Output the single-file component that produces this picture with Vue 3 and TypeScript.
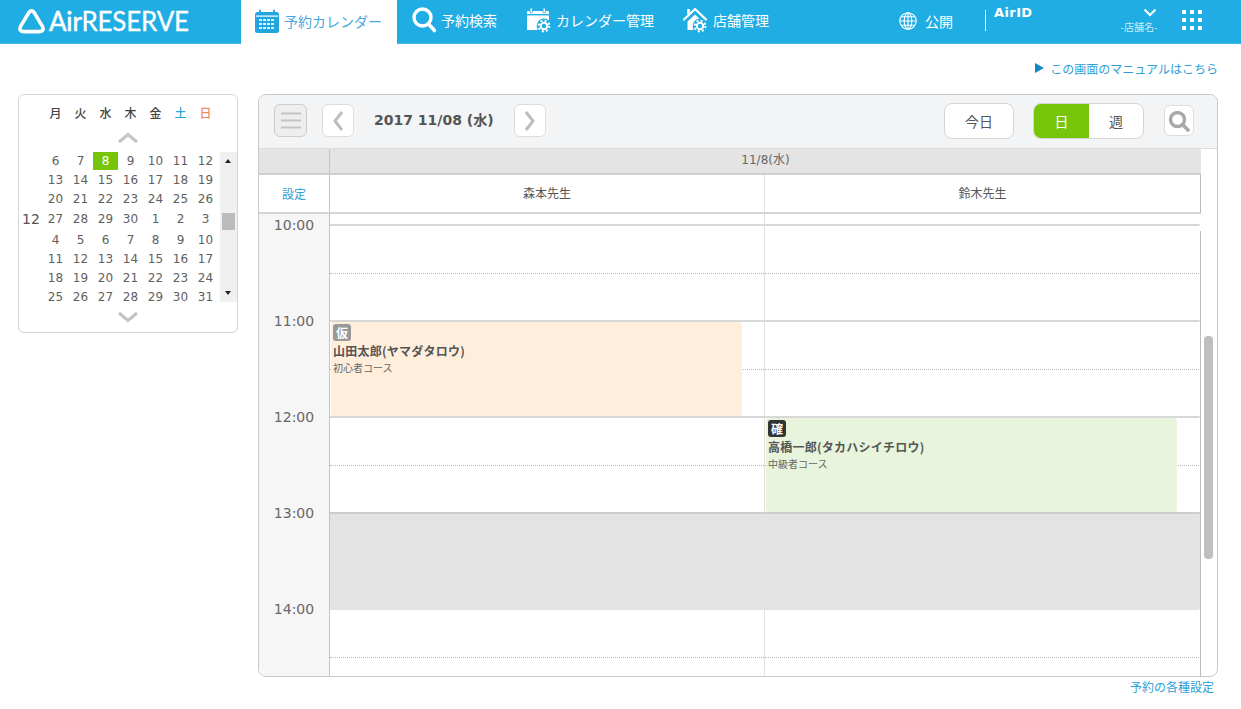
<script setup lang="ts">
interface Booking {
  lane: number
  hour: number
  badge: string
  kind: 'temp' | 'fixed'
  name: string
  course: string
}

const weekdays = ['月', '火', '水', '木', '金', '土', '日']
const weeks = [
  { label: '', days: [6, 7, 8, 9, 10, 11, 12] },
  { label: '', days: [13, 14, 15, 16, 17, 18, 19] },
  { label: '', days: [20, 21, 22, 23, 24, 25, 26] },
  { label: '12', days: [27, 28, 29, 30, 1, 2, 3] },
  { label: '', days: [4, 5, 6, 7, 8, 9, 10] },
  { label: '', days: [11, 12, 13, 14, 15, 16, 17] },
  { label: '', days: [18, 19, 20, 21, 22, 23, 24] },
  { label: '', days: [25, 26, 27, 28, 29, 30, 31] },
]
const hours = [10, 11, 12, 13, 14]
const lanes = ['森本先生', '鈴木先生']
const bookings: Booking[] = [
  { lane: 0, hour: 11, badge: '仮', kind: 'temp', name: '山田太郎(ヤマダタロウ)', course: '初心者コース' },
  { lane: 1, hour: 12, badge: '確', kind: 'fixed', name: '高橋一郎(タカハシイチロウ)', course: '中級者コース' },
]

// 10px lead-in above 10:00, then 96px an hour
function bookingTop(b: Booking) {
  return { top: 10 + (b.hour - 10) * 96 + 2 + 'px' }
}
</script>

<template>
  <div class="app">
    <header class="top">
      <div class="logo">
        <svg width="27" height="26" viewBox="0 0 27 26">
          <path d="M10.8 4.6 Q13.5 1.2 16.2 4.6 L24.4 18.4 Q26.6 23.4 21.4 23.6 H5.6 Q.4 23.4 2.6 18.4 Z" fill="none" stroke="#fff" stroke-width="3.6" stroke-linejoin="round" />
        </svg>
        <span class="logo-text"><b>Air</b><span>RESERVE</span></span>
      </div>
      <nav class="nav">
        <a class="tab">
          <svg width="24" height="24" viewBox="0 0 24 24">
            <rect x="0" y="3" width="24" height="21" rx="2.5" fill="#23a5e0" />
            <rect x="1" y="6.5" width="22" height="1.2" fill="#fff" />
            <rect x="4" y="0.5" width="2" height="5" rx="1" fill="#23a5e0" />
            <rect x="18" y="0.5" width="2" height="5" rx="1" fill="#23a5e0" />
            <g fill="#fff" opacity=".85">
              <rect x="4" y="10" width="3" height="2" /><rect x="8" y="10" width="3" height="2" /><rect x="12" y="10" width="3" height="2" /><rect x="16" y="10" width="3" height="2" />
              <rect x="4" y="14" width="3" height="2" /><rect x="8" y="14" width="3" height="2" /><rect x="12" y="14" width="3" height="2" /><rect x="16" y="14" width="3" height="2" />
              <rect x="4" y="18" width="3" height="2" /><rect x="8" y="18" width="3" height="2" /><rect x="12" y="18" width="3" height="2" /><rect x="16" y="18" width="3" height="2" />
            </g>
          </svg>
          <span>予約カレンダー</span>
        </a>
        <a class="nav-item first">
          <svg width="24" height="26" viewBox="0 0 24 26">
            <circle cx="10.5" cy="10.5" r="8.5" fill="none" stroke="#fff" stroke-width="3.4" />
            <path d="M16.5 17 L22.5 23.5" stroke="#fff" stroke-width="3.6" stroke-linecap="round" />
          </svg>
          <span>予約検索</span>
        </a>
        <a class="nav-item">
          <svg width="25" height="26" viewBox="0 0 25 26">
            <path d="M2 4 H22 a1 1 0 0 1 1 1 V22 a1 1 0 0 1 -1 1 H1 V5 a1 1 0 0 1 1 -1 Z" fill="#fff" />
            <rect x="4" y="1" width="2.4" height="5" rx="1" fill="#fff" stroke="#20ade4" stroke-width=".8" />
            <rect x="17" y="1" width="2.4" height="5" rx="1" fill="#fff" stroke="#20ade4" stroke-width=".8" />
            <rect x="1" y="7" width="22" height="1.4" fill="#20ade4" />
            <circle cx="18" cy="19" r="7.4" fill="#20ade4" />
            <circle cx="18" cy="19" r="3.2" fill="none" stroke="#fff" stroke-width="2" />
            <circle cx="18" cy="19" r="5.4" fill="none" stroke="#fff" stroke-width="2" stroke-dasharray="2 2.24" />
          </svg>
          <span>カレンダー管理</span>
        </a>
        <a class="nav-item">
          <svg width="25" height="26" viewBox="0 0 25 26">
            <path d="M1 12.5 L12 2 L23 12.5" fill="none" stroke="#fff" stroke-width="2.2" stroke-linejoin="round" stroke-linecap="round" />
            <rect x="4.2" y="2" width="2.6" height="5.5" fill="#fff" />
            <path d="M4.5 14.5 L12 7.6 L19.5 14.5 V23 H4.5 Z" fill="#fff" />
            <circle cx="17" cy="19" r="7.4" fill="#20ade4" />
            <circle cx="17" cy="19" r="3.2" fill="none" stroke="#fff" stroke-width="2" />
            <circle cx="17" cy="19" r="5.4" fill="none" stroke="#fff" stroke-width="2" stroke-dasharray="2 2.24" />
          </svg>
          <span>店舗管理</span>
        </a>
      </nav>
      <div class="right">
        <a class="publish">
          <svg width="18" height="18" viewBox="0 0 18 18" fill="none" stroke="#fff" stroke-width="1.1">
            <circle cx="9" cy="9" r="8.2" />
            <ellipse cx="9" cy="9" rx="3.8" ry="8.2" />
            <path d="M9 .8 V17.2 M.8 9 H17.2 M2 4.8 H16 M2 13.2 H16" />
          </svg>
          <span>公開</span>
        </a>
        <i class="divider"></i>
        <div class="account">
          <span class="air-id">AirID</span>
          <div class="shop">
            <svg width="14" height="9" viewBox="0 0 14 9">
              <path d="M1.5 1.5 L7 7 L12.5 1.5" fill="none" stroke="#fff" stroke-width="2" />
            </svg>
            <span>-店舗名-</span>
          </div>
        </div>
        <div class="apps">
          <i v-for="n in 9" :key="n"></i>
        </div>
      </div>
    </header>

    <div class="manual">
      <a><i class="play"></i>この画面のマニュアルはこちら</a>
    </div>

    <main class="content">
      <aside class="mini">
        <div class="mini-head">
          <span v-for="(d, i) in weekdays" :key="d" :class="{ sat: i === 5, sun: i === 6 }">{{ d }}</span>
        </div>
        <svg class="chev chev-up" width="22" height="12" viewBox="0 0 22 12">
          <path d="M2 10 L11 2.5 L20 10" fill="none" stroke="#c4c4c4" stroke-width="3" />
        </svg>
        <div class="mini-body">
          <div class="weeks">
            <div v-for="(w, i) in weeks" :key="i" class="week" :class="{ start: w.label }">
              <span class="month">{{ w.label }}</span>
              <span v-for="(d, j) in w.days" :key="j" class="day" :class="{ today: i === 0 && d === 8 }">{{ d }}</span>
            </div>
          </div>
          <div class="mini-scroll">
            <i class="arr up"></i>
            <i class="mini-thumb"></i>
            <i class="arr down"></i>
          </div>
        </div>
        <svg class="chev chev-down" width="22" height="12" viewBox="0 0 22 12">
          <path d="M2 2 L11 9.5 L20 2" fill="none" stroke="#c4c4c4" stroke-width="3" />
        </svg>
      </aside>

      <section class="panel">
        <div class="toolbar">
          <button class="tbtn menu">
            <svg width="20" height="17" viewBox="0 0 20 17">
              <path d="M0 1.5 H20 M0 8.5 H20 M0 15.5 H20" stroke="#c4c4c4" stroke-width="2" />
            </svg>
          </button>
          <button class="tbtn">
            <svg width="12" height="22" viewBox="0 0 12 22">
              <path d="M10 2 L3 11 L10 20" fill="none" stroke="#bdbdbd" stroke-width="3" />
            </svg>
          </button>
          <span class="date">2017 11/08 (水)</span>
          <button class="tbtn">
            <svg width="12" height="22" viewBox="0 0 12 22">
              <path d="M2 2 L9 11 L2 20" fill="none" stroke="#bdbdbd" stroke-width="3" />
            </svg>
          </button>
          <button class="today-btn">今日</button>
          <div class="seg">
            <span class="seg-on">日</span>
            <span class="seg-off">週</span>
          </div>
          <button class="tbtn find">
            <svg width="22" height="22" viewBox="0 0 22 22">
              <circle cx="9.5" cy="9.5" r="7" fill="none" stroke="#a8a8a8" stroke-width="3.4" />
              <path d="M14.5 14.5 L20 20" stroke="#a8a8a8" stroke-width="3.6" stroke-linecap="round" />
            </svg>
          </button>
        </div>

        <div class="sched">
          <div class="sched-main">
            <div class="row-date">
              <div class="corner"></div>
              <div class="date-cell">11/8(水)</div>
            </div>
            <div class="row-names">
              <a class="setting">設定</a>
              <div v-for="l in lanes" :key="l" class="name-cell">{{ l }}</div>
            </div>
            <div class="body">
              <div class="times">
                <div v-for="h in hours" :key="h" class="time">{{ h }}:00</div>
              </div>
              <div class="lanes">
                <div v-for="(l, i) in lanes" :key="l" class="lane">
                  <div class="lead"></div>
                  <div v-for="h in hours" :key="h" class="slot" :class="{ closed: h === 13, reopen: h === 14 }">
                    <div class="half"></div>
                  </div>
                  <template v-for="b in bookings" :key="b.name">
                    <div v-if="b.lane === i" class="booking" :class="b.kind" :style="bookingTop(b)">
                      <span class="badge">{{ b.badge }}</span>
                      <strong class="who">{{ b.name }}</strong>
                      <small class="course">{{ b.course }}</small>
                    </div>
                  </template>
                </div>
              </div>
            </div>
          </div>
          <div class="track"><i class="thumb"></i></div>
        </div>
      </section>
    </main>

    <div class="foot"><a>予約の各種設定</a></div>
  </div>
</template>

<style>
html, body { margin: 0; background: #fff; }
</style>

<style scoped>
.app {
  width: 1241px; height: 709px; overflow: hidden; background: #fff; color: #555;
  font-family: "Noto Sans CJK JP", "DejaVu Sans", sans-serif; font-size: 12px;
}
a { cursor: pointer; }
button { font: inherit; color: inherit; padding: 0; cursor: pointer; }

.top {
  height: 43px; display: flex; background: #20ade4; border-bottom: 1px solid #3db8e8; color: #fff; font-size: 14px;
}
.logo { width: 241px; box-sizing: border-box; padding: 0 0 2px 18px; display: flex; align-items: center; gap: 4px; }
.logo-text { font-family: Lato, sans-serif; font-size: 26px; line-height: 1; letter-spacing: -0.2px; }
.logo-text b { font-weight: 400; -webkit-text-stroke: 0.5px #fff; }
.logo-text span { -webkit-text-stroke: 0.3px #fff; }
.nav { display: flex; height: 44px; }
.tab {
  width: 156px; box-sizing: border-box; padding: 0 0 3px 14px; display: flex; align-items: center; gap: 5px;
  background: #fff; color: #4aa8dd;
}
.nav-item { display: flex; align-items: center; gap: 5px; margin-left: 29px; height: 43px; box-sizing: border-box; padding-bottom: 3px; }
.nav-item.first { margin-left: 15px; }
.right { margin-left: auto; display: flex; align-items: flex-start; }
.publish { display: flex; align-items: center; gap: 8px; height: 43px; box-sizing: border-box; padding-bottom: 2px; }
.divider { width: 1px; height: 21px; background: #fff; margin: 10px 8px 0 32px; }
.account { width: 162px; position: relative; height: 43px; }
.air-id { font: bold 13px "DejaVu Sans", sans-serif; letter-spacing: 0.4px; position: absolute; left: 0; top: 5px; }
.shop {
  position: absolute; left: 126px; top: 8px; width: 38px; display: flex; flex-direction: column;
  align-items: center; font-size: 10px; color: #cdeaf8; line-height: 14px; gap: 3px;
}
.shop svg { margin-left: 22px; }
.apps {
  width: 20px; margin: 10px 39px 0 26px; display: grid; grid-template-columns: repeat(3, 4px); gap: 4px;
  justify-content: space-between;
}
.apps i { width: 4px; height: 4px; background: #fff; display: block; }

.manual { height: 50px; box-sizing: border-box; padding: 15px 23px 0 0; text-align: right; color: #2a9fd8; line-height: 17px; }
.manual a { display: inline-flex; align-items: center; }
.play {
  width: 0; height: 0; border-left: 9px solid #1587c6; border-top: 5.5px solid transparent;
  border-bottom: 5.5px solid transparent; margin-right: 6px;
}

.content { display: flex; align-items: flex-start; gap: 20px; padding-left: 18px; }

.mini {
  width: 220px; height: 239px; box-sizing: border-box; border: 1px solid #d5d5d5; border-radius: 6px;
  display: flex; flex-direction: column; align-items: center; flex: none;
}
.mini-head {
  align-self: stretch; display: grid; grid-template-columns: repeat(7, 25px); padding: 9px 0 0 24px;
  font-weight: 500; line-height: 18px; text-align: center; color: #444;
}
.sat { color: #2aa6e0; }
.sun { color: #f08a66; }
.chev { display: block; flex: none; }
.chev-up { margin: 10px 0 8px; }
.chev-down { margin-top: 5px; }
.mini-body { align-self: stretch; height: 154px; display: flex; align-items: flex-start; }
.weeks { width: 199px; flex: none; }
.week {
  display: grid; grid-template-columns: 24px repeat(7, 25px); height: 19px; text-align: center;
  font: 12px/19px "DejaVu Sans", sans-serif; color: #606060;
}
.week.start { margin: 1px 0 2px; }
.month { font-size: 14px; color: #555; }
.day.today { background: #76c50a; color: #fff; height: 18px; line-height: 18px; }
.mini-scroll {
  width: 17px; height: 150px; margin-left: 2px; background: #f0f0f0; position: relative; flex: none;
}
.mini-thumb { position: absolute; left: 2px; top: 61px; width: 13px; height: 17px; background: #bbb; }
.arr { position: absolute; left: 5px; width: 0; height: 0; border-left: 3.5px solid transparent; border-right: 3.5px solid transparent; }
.arr.up { top: 7px; border-bottom: 4px solid #222; }
.arr.down { bottom: 7px; border-top: 4px solid #222; }

.panel {
  width: 960px; height: 583px; box-sizing: border-box; border: 1px solid #c9c9c9; border-radius: 8px;
  overflow: hidden; flex: none; background: #fff;
}
.toolbar {
  height: 54px; box-sizing: border-box; background: #f3f4f5; border-bottom: 1px solid #dcdcdc;
  display: flex; align-items: center; padding: 0 23px 2px 15px;
}
.tbtn {
  width: 32px; height: 33px; background: #fff; border: 1px solid #ddd; border-radius: 6px;
  display: flex; align-items: center; justify-content: center; box-sizing: border-box;
}
.tbtn.menu { width: 33px; background: #eee; border-color: #ccc; margin-right: 15px; }
.date {
  font: bold 14px "DejaVu Sans", "Noto Sans CJK JP", sans-serif; color: #555; margin: 0 19px 3px 20px;
  width: 121px; white-space: nowrap;
}
.today-btn {
  margin-left: auto; width: 70px; height: 36px; background: #fff; border: 1px solid #d5d5d5; border-radius: 8px;
  font-size: 14px; color: #555;
}
.seg {
  margin-left: 19px; width: 111px; height: 36px; display: flex; box-sizing: border-box; border: 1px solid #d5d5d5;
  border-radius: 8px; overflow: hidden; font-size: 14px; line-height: 34px; text-align: center; background: #fff;
}
.seg-on { width: 55px; background: #76c50a; color: #fff; }
.seg-off { flex: 1; }
.tbtn.find { width: 30px; height: 31px; margin-left: 20px; }

.sched { display: flex; height: 528px; }
.sched-main { width: 942px; flex: none; }
.row-date { height: 26px; display: flex; background: #e4e4e4; border-bottom: 2px solid #cfcfcf; box-sizing: border-box; }
.corner { width: 71px; box-sizing: border-box; border-right: 1px solid #c4c4c4; }
.date-cell { flex: 1; text-align: center; font: 12px/22px "DejaVu Sans", "Noto Sans CJK JP", sans-serif; color: #666; }
.row-names { height: 39px; display: flex; box-sizing: border-box; border-bottom: 2px solid #d5d5d5; border-right: 1px solid #bbb; }
.setting {
  width: 71px; box-sizing: border-box; border-right: 1px solid #c4c4c4; text-align: center; color: #2a9fd8; line-height: 37px;
}
.name-cell { width: 435px; box-sizing: border-box; text-align: center; line-height: 36px; color: #555; border-right: 1px solid #e2e2e2; }
.name-cell:last-child { border-right: none; }
.body { display: flex; height: 463px; overflow: hidden; }
.times { width: 71px; flex: none; box-sizing: border-box; background: #f6f6f6; border-right: 1px solid #c4c4c4; }
.time { height: 96px; font: 14px/23px "DejaVu Sans", sans-serif; color: #666; text-align: center; }
.lanes { flex: 1; display: flex; position: relative; }
.lanes::after { content: ""; position: absolute; right: 0; top: 17px; bottom: 0; width: 1px; background: #bbb; }
.lane { width: 435px; flex: none; position: relative; }
.lead { height: 10px; border-right: 1px solid #e2e2e2; }
.slot { height: 96px; box-sizing: border-box; border-top: 2px solid #d8d8d8; border-right: 1px solid #e2e2e2; }
.lane:last-child .lead, .lane:last-child .slot { border-right-color: transparent; }
.half { height: 48px; box-sizing: border-box; border-bottom: 1px dotted #bbb; }
.slot.closed { background: #e3e3e3; border-top-color: #ccc; border-right-color: #e3e3e3; }
.slot.closed .half { border-bottom: none; }
.slot.reopen { border-top-color: #e3e3e3; }
.booking {
  position: absolute; left: 1px; width: 411px; height: 94px; box-sizing: border-box; padding: 2px 0 0 2px;
  border-radius: 3px; display: flex; flex-direction: column; align-items: flex-start;
}
.booking.temp { background: #ffeedb; }
.booking.fixed { background: #e8f4dc; }
.badge {
  width: 18px; height: 17px; border-radius: 3px; color: #fff; font-weight: bold; font-size: 12px; line-height: 17px; text-align: center;
}
.temp .badge { background: #999; }
.fixed .badge { background: #333; }
.who { font-size: 12px; line-height: 18px; margin-top: 1px; letter-spacing: 0.25px; color: #555; }
.course { font-size: 10px; line-height: 16px; color: #666; }
.track { flex: 1; padding: 187px 5px 0 3px; }
.thumb { display: block; width: 9px; height: 223px; background: #bfbfbf; border-radius: 4px; }

.foot { text-align: right; padding: 2px 27px 0 0; color: #2a9fd8; line-height: 16px; }
</style>
